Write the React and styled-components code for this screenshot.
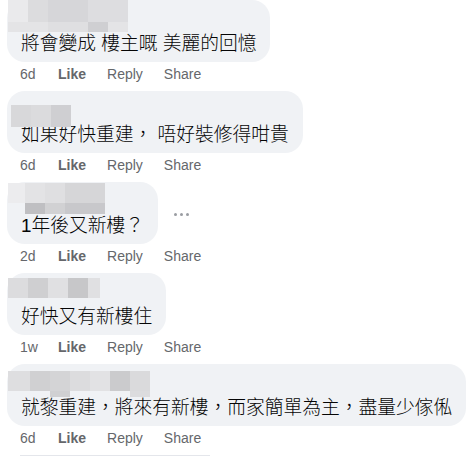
import styled, { createGlobalStyle } from "styled-components";

const GlobalStyle = createGlobalStyle`
  html, body {
    margin: 0;
    padding: 0;
    background: #ffffff;
  }
`;

const comments = [
  {
    time: "6d",
    text: "將會變成 樓主嘅 美麗的回憶",
    mosaic: {
      top: 0,
      left: 1,
      rows: [
        { h: 22, cells: [[20, "#eaeaec"], [20, "#dcdcde"], [40, "#d6d6d9"], [40, "#dddde0"]] },
        { h: 10, cells: [[40, "#e4e4e6"], [40, "#dfdfe1"], [20, "#cfcfd2"], [20, "#e4e4e6"]] }
      ]
    }
  },
  {
    time: "6d",
    text: "如果好快重建， 唔好裝修得咁貴",
    mosaic: {
      top: 14,
      left: 4,
      rows: [{ h: 22, cells: [[20, "#d8d8da"], [20, "#dbdbdd"], [20, "#cfcfd2"]] }]
    }
  },
  {
    time: "2d",
    text: "1年後又新樓？",
    more: true,
    mosaic: {
      top: 1,
      left: 1,
      rows: [
        { h: 20, cells: [[17, "#ececee"], [20, "#e3e3e5"], [20, "#dfdfe1"], [40, "#d6d6d8"]] },
        { h: 11, cells: [[17, "transparent"], [20, "#bfbfc2"], [20, "#d1d1d3"], [40, "#c8c8cb"]] }
      ]
    }
  },
  {
    time: "1w",
    text: "好快又有新樓住",
    mosaic: {
      top: 5,
      left: 1,
      rows: [{ h: 20, cells: [[20, "#dcdcde"], [20, "#cfcfd1"], [20, "#e0e0e2"], [20, "#c7c7c9"], [12, "#e0e0e2"]] }]
    }
  },
  {
    time: "6d",
    text: "就黎重建，將來有新樓，而家簡單為主，盡量少傢俬",
    mosaic: {
      top: 7,
      left: 1,
      rows: [
        {
          h: 20,
          cells: [[22, "#dedee0"], [20, "#d0d0d2"], [20, "#d4d4d6"], [20, "#dcdcde"], [20, "#e2e2e4"], [20, "#cbcbcd"], [20, "#dadadc"]]
        },
        { h: 6, cells: [[42, "transparent"], [20, "#d0d0d2"], [60, "transparent"], [20, "#dcdcde"]] }
      ]
    }
  }
];

const Mosaic = ({ data }) => (
  <MosaicBox $top={data.top} $left={data.left}>
    {data.rows.map((row, i) => (
      <MosaicRow key={i} $h={row.h}>
        {row.cells.map(([w, c], j) => (
          <MosaicCell key={j} $w={w} $c={c} />
        ))}
      </MosaicRow>
    ))}
  </MosaicBox>
);

const Comment = ({ c }) => (
  <Item>
    <BubbleRow>
      <Bubble>
        <Mosaic data={c.mosaic} />
        <NameRow />
        <Text>{c.text}</Text>
      </Bubble>
      {c.more && (
        <MoreDots>
          <Dot />
          <Dot />
          <Dot />
        </MoreDots>
      )}
    </BubbleRow>
    <Meta>
      <Time>{c.time}</Time>
      <Action $bold>Like</Action>
      <Action>Reply</Action>
      <Action>Share</Action>
    </Meta>
  </Item>
);

const App = () => {
  return (
    <Page>
      <GlobalStyle />
      {comments.map((c, i) => (
        <Comment key={i} c={c} />
      ))}
      <Divider />
    </Page>
  );
};

export default App;

const Page = styled.div`
  width: 476px;
  height: 457px;
  overflow: hidden;
  padding-left: 7px;
  box-sizing: border-box;
  display: flex;
  flex-direction: column;
`;

const Item = styled.div`
  display: flex;
  flex-direction: column;
  margin-bottom: 9px;
`;

const BubbleRow = styled.div`
  display: flex;
  align-items: center;
`;

const Bubble = styled.div`
  position: relative;
  background: #f0f2f5;
  border-radius: 18px;
  padding: 14px 14px 7px;
  box-sizing: border-box;
  height: 62px;
`;

const NameRow = styled.div`
  height: 19px;
`;

const MosaicBox = styled.div`
  position: absolute;
  top: ${p => p.$top}px;
  left: ${p => p.$left}px;
  display: flex;
  flex-direction: column;
`;

const MosaicRow = styled.div`
  display: flex;
  height: ${p => p.$h}px;
`;

const MosaicCell = styled.div`
  width: ${p => p.$w}px;
  height: 100%;
  background: ${p => p.$c};
`;

const Text = styled.div`
  font-family: "Liberation Sans", "Noto Sans CJK TC", sans-serif;
  font-size: 18.75px;
  font-weight: 300;
  line-height: 22px;
  color: #050505;
  white-space: nowrap;
`;

const MoreDots = styled.div`
  display: flex;
  gap: 3px;
  margin-left: 16px;
  margin-top: 2px;
`;

const Dot = styled.span`
  width: 3px;
  height: 3px;
  border-radius: 50%;
  background: #9a9da2;
`;

const Meta = styled.div`
  display: flex;
  align-items: center;
  margin-top: 4px;
  padding-left: 13px;
  height: 16px;
  font-family: "Liberation Sans", Arial, sans-serif;
  font-size: 14px;
  line-height: 16px;
  color: #65676b;
`;

const Time = styled.span`
  width: 38px;
`;

const Action = styled.span`
  font-weight: ${p => (p.$bold ? 700 : 400)};
  margin-right: 21px;
`;

const Divider = styled.div`
  width: 190px;
  height: 1px;
  margin-left: 13px;
  background: #e4e6eb;
`;
